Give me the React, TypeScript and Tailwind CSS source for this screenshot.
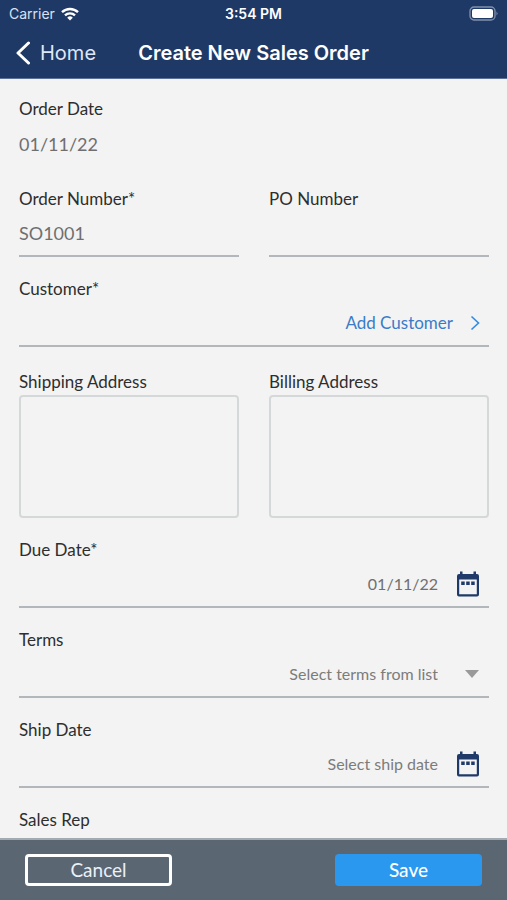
import type { ReactNode } from "react";

const LABEL = "block h-6 text-[17px] leading-6 text-[#2e2e2e]";
const LINE = "flex h-[46px] items-center border-b-2 border-[#b1b7ba]";
const VALUE =
  "min-w-0 flex-1 bg-transparent text-[#6f6f6f] placeholder:text-[#7c7c7c] placeholder:opacity-100 outline-none";
const BOX =
  "mt-px block h-[123px] w-full resize-none rounded-[4px] border-2 border-[#d5d8d9] bg-[#f3f3f3] p-2 outline-none";

function Field({ id, label, children }: { id: string; label: string; children: ReactNode }) {
  return (
    <div className="min-w-0">
      <label htmlFor={id} className={LABEL}>
        {label}
      </label>
      {children}
    </div>
  );
}

function CalendarIcon() {
  return (
    <svg viewBox="0 0 24 26" className="h-[26px] w-6" aria-hidden="true">
      <path
        fill="#1f3a68"
        fillRule="evenodd"
        d="M4 .5h2.500V3h11V.5H20V3h1a2 2 0 0 1 2 2v18.500a2 2 0 0 1-2 2H3a2 2 0 0 1-2-2V5a2 2 0 0 1 2-2h1zM3.200 8.500v14.800h17.600V8.500z"
      />
      <path fill="#1f3a68" d="M5.200 10.500h3.500v3.500H5.200zM10.200 10.500h3.500v3.500h-3.500zM15.200 10.500h3.500v3.500h-3.500z" />
    </svg>
  );
}

function DateField({ id, label, value, placeholder }: { id: string; label: string; value?: string; placeholder?: string }) {
  return (
    <Field id={id} label={label}>
      <div className={LINE}>
        <input id={id} defaultValue={value} placeholder={placeholder} className={`${VALUE} text-right text-[16px]`} />
        <button type="button" aria-label={`Choose ${label}`} className="mr-[9px] ml-[18px]">
          <CalendarIcon />
        </button>
      </div>
    </Field>
  );
}

function StatusBar() {
  return (
    <div className="grid h-[27px] grid-cols-3 items-center px-[9px] text-[14px] leading-4">
      <div className="flex items-center gap-[6px] text-[#d9e2f1]">
        <span>Carrier</span>
        <svg viewBox="0 0 18 14" className="h-[14px] w-[18px]" fill="none" stroke="#fff" strokeWidth="2.400" aria-hidden="true">
          <path d="M1 5.200a11.500 11.500 0 0 1 16 0" />
          <path d="M4 8.400a7.200 7.200 0 0 1 10 0" />
          <path d="M9 13.500 6.200 10.700a4 4 0 0 1 5.600 0z" fill="#fff" stroke="none" />
        </svg>
      </div>
      <span className="text-center font-semibold">3:54 PM</span>
      <svg viewBox="0 0 29 15" className="h-[15px] w-[29px] justify-self-end" aria-hidden="true">
        <rect x="1" y="1" width="25" height="13" rx="4" fill="none" stroke="#8191ab" strokeWidth="1.300" />
        <rect x="3" y="3" width="21" height="9" rx="2" fill="#fff" />
        <path d="M27.500 5.500q2 2 0 4z" fill="#8191ab" />
      </svg>
    </div>
  );
}

export default function App() {
  return (
    <div className="flex h-screen flex-col bg-[#f3f3f3] font-['Lato',sans-serif]">
      <header className="shrink-0 border-b border-[#5d7196] bg-[#1e3966] font-['Inter',sans-serif] text-white">
        <StatusBar />
        <div className="grid h-[51px] grid-cols-[1fr_auto_1fr] items-center px-[15px]">
          <button type="button" className="flex items-center gap-[10px] text-[20px] text-[#dfe7f4]">
            <svg viewBox="0 0 15 24" className="h-6 w-[15px]" fill="none" stroke="#fff" strokeWidth="3" strokeLinecap="round" strokeLinejoin="round" aria-hidden="true">
              <path d="M13.500 2 3 12l10.500 10" />
            </svg>
            Home
          </button>
          <h1 className="text-[20px] font-semibold">Create New Sales Order</h1>
        </div>
      </header>

      <main className="min-h-0 flex-1 overflow-hidden pt-[18px] pr-[18px] pl-[19px]">
        <form id="order" className="flex flex-col gap-5">
          <Field id="order-date" label="Order Date">
            <div className="flex h-[46px] items-center">
              <input id="order-date" readOnly defaultValue="01/11/22" className={`${VALUE} text-[18px]`} />
            </div>
          </Field>

          <div className="grid grid-cols-2 gap-[30px]">
            <Field id="order-number" label="Order Number*">
              <div className={LINE}>
                <input id="order-number" defaultValue="SO1001" className={`${VALUE} text-[18px]`} />
              </div>
            </Field>
            <Field id="po-number" label="PO Number">
              <div className={LINE}>
                <input id="po-number" className={`${VALUE} text-[18px]`} />
              </div>
            </Field>
          </div>

          <Field id="customer" label="Customer*">
            <div className={`${LINE} justify-end`}>
              <button id="customer" type="button" className="mr-[9px] flex items-center gap-[17px] text-[17px] text-[#3a7cc9]">
                Add Customer
                <svg viewBox="0 0 10 16" className="h-4 w-[10px]" fill="none" stroke="#2f8ae6" strokeWidth="1.600" aria-hidden="true">
                  <path d="m1.500 1.500 7 6.500-7 6.500" />
                </svg>
              </button>
            </div>
          </Field>

          <div className="mt-[3px] grid grid-cols-2 gap-[30px]">
            <Field id="shipping" label="Shipping Address">
              <textarea id="shipping" className={BOX} />
            </Field>
            <Field id="billing" label="Billing Address">
              <textarea id="billing" className={BOX} />
            </Field>
          </div>

          <DateField id="due-date" label="Due Date*" value="01/11/22" />

          <Field id="terms" label="Terms">
            <div className={`${LINE} relative`}>
              <select
                id="terms"
                className="h-full w-full appearance-none bg-transparent pr-[51px] text-[16px] text-[#7c7c7c] outline-none [text-align-last:right]"
              >
                <option>Select terms from list</option>
              </select>
              <svg viewBox="0 0 14 8" className="pointer-events-none absolute right-[10px] h-2 w-[14px]" fill="#999" aria-hidden="true">
                <path d="M0 0h14L7 8z" />
              </svg>
            </div>
          </Field>

          <DateField id="ship-date" label="Ship Date" placeholder="Select ship date" />

          <Field id="sales-rep" label="Sales Rep">
            <div className={LINE}>
              <input id="sales-rep" className={`${VALUE} text-[16px]`} />
            </div>
          </Field>
        </form>
      </main>

      <footer className="flex h-[62px] shrink-0 items-center justify-between border-t-2 border-[#a3abb0] bg-[#5b6673] px-[25px] text-[19px] text-white">
        <button type="button" className="h-8 w-[147px] rounded-[4px] border-3 border-white leading-6 text-[#eaf1f9]">
          Cancel
        </button>
        <button type="submit" form="order" className="h-8 w-[147px] rounded-[4px] bg-[#2b98f0] leading-6 font-medium">
          Save
        </button>
      </footer>
    </div>
  );
}
